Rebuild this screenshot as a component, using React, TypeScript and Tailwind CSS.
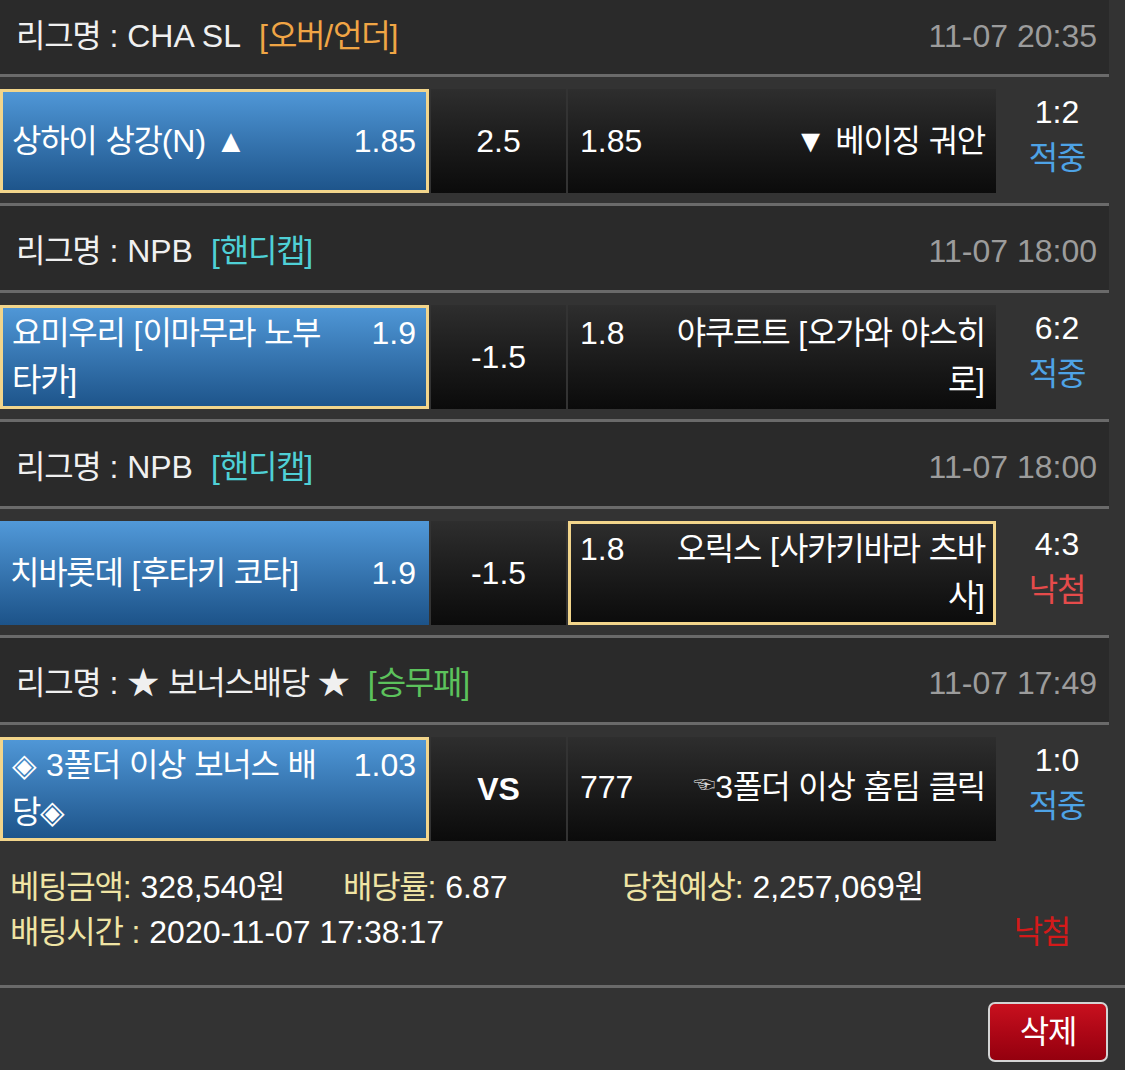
import React from "react";

const HANGUL = /([\uAC00-\uD7A3\u3130-\u318F]+)/;

function T({ s }: { s: string }) {
  const parts = s.split(HANGUL);
  return (
    <>
      {parts.map((p, i) =>
        p && HANGUL.test(p) ? (
          <span key={i} className="tracking-[-0.04em]">
            {p}
          </span>
        ) : (
          <React.Fragment key={i}>{p}</React.Fragment>
        )
      )}
    </>
  );
}

type HeaderProps = {
  first?: boolean;
  league: string;
  tag: string;
  tagClass: string;
  date: string;
};

function Header({ first, league, tag, tagClass, date }: HeaderProps) {
  return (
    <div
      className={`flex w-[1109px] items-center justify-between border-b-[3px] border-[#6a6a6a] bg-[#2a2a2a] pl-4 pr-3 ${
        first ? "h-[77px] pb-[2px]" : "h-[87px] pt-[6px]"
      }`}
    >
      <div className="flex items-center whitespace-nowrap text-[#f0f0f0]">
        <span>
          <T s={league} />
        </span>
        <span className={`ml-[18px] ${tagClass}`}>
          <T s={tag} />
        </span>
      </div>
      <div className="whitespace-nowrap text-[#9c9c9c]">{date}</div>
    </div>
  );
}

type MatchProps = {
  last?: boolean;
  home: React.ReactNode[];
  homeOdds: string;
  homeSel: boolean;
  mid: string;
  midBold?: boolean;
  awayOdds: string;
  away: React.ReactNode[];
  awaySel: boolean;
  score: string;
  result: string;
  win: boolean;
};

function Match(m: MatchProps) {
  return (
    <div
      className={`flex w-[1109px] items-start pt-[12px] ${
        m.last ? "h-[126px]" : "h-[129px] border-b-[3px] border-[#6a6a6a]"
      }`}
    >
      <div
        className={`flex h-[104px] w-[429px] shrink-0 items-center border-[3px] bg-linear-to-b from-[#5199d9] to-[#1c5389] bg-origin-border pr-[10px] text-white ${
          m.homeSel ? "border-[#f2d58b] pl-[9px]" : "border-transparent pl-[7px]"
        }`}
      >
        <div className="flex w-full items-start justify-between leading-[47px]">
          <div className="whitespace-nowrap">
            {m.home.map((l, i) => (
              <div key={i}>{l}</div>
            ))}
          </div>
          <div className="shrink-0">{m.homeOdds}</div>
        </div>
      </div>
      <div
        className={`ml-[2px] flex h-[104px] w-[135px] shrink-0 items-center justify-center bg-linear-to-b from-[#2e2e2e] to-[#0b0b0b] text-white ${
          m.midBold ? "font-bold" : ""
        }`}
      >
        {m.mid}
      </div>
      <div
        className={`ml-[2px] flex h-[104px] w-[428px] shrink-0 items-center border-[3px] bg-linear-to-b from-[#2e2e2e] to-[#0b0b0b] bg-origin-border pl-[9px] pr-[8px] text-white ${
          m.awaySel ? "border-[#f2d58b]" : "border-transparent"
        }`}
      >
        <div className="flex w-full items-start justify-between leading-[47px]">
          <div className="shrink-0">{m.awayOdds}</div>
          <div className="whitespace-nowrap text-right">
            {m.away.map((l, i) => (
              <div key={i}>{l}</div>
            ))}
          </div>
        </div>
      </div>
      <div className="flex h-[104px] w-[113px] shrink-0 flex-col items-center pl-[9px] leading-[46px]">
        <div className="text-white">{m.score}</div>
        <div className={m.win ? "text-[#4ea3e6]" : "text-[#e54b4b]"}>
          <T s={m.result} />
        </div>
      </div>
    </div>
  );
}

export default function App() {
  return (
    <div className="h-[1070px] w-[1125px] overflow-hidden bg-[#333333] font-['Liberation_Sans','Noto_Sans_CJK_KR',sans-serif] text-[32px]">
      <Header
        first
        league="리그명 : CHA SL"
        tag="[오버/언더]"
        tagClass="text-[#f0a545]"
        date="11-07 20:35"
      />
      <Match
        home={[<T key="a" s="상하이 상강(N) ▲" />]}
        homeOdds="1.85"
        homeSel
        mid="2.5"
        awayOdds="1.85"
        away={[<T key="a" s="▼ 베이징 궈안" />]}
        awaySel={false}
        score="1:2"
        result="적중"
        win
      />
      <Header
        league="리그명 : NPB"
        tag="[핸디캡]"
        tagClass="text-[#4fd0d6]"
        date="11-07 18:00"
      />
      <Match
        home={[<T key="a" s="요미우리 [이마무라 노부" />, <T key="b" s="타카]" />]}
        homeOdds="1.9"
        homeSel
        mid="-1.5"
        awayOdds="1.8"
        away={[<T key="a" s="야쿠르트 [오가와 야스히" />, <T key="b" s="로]" />]}
        awaySel={false}
        score="6:2"
        result="적중"
        win
      />
      <Header
        league="리그명 : NPB"
        tag="[핸디캡]"
        tagClass="text-[#4fd0d6]"
        date="11-07 18:00"
      />
      <Match
        home={[<T key="a" s="치바롯데 [후타키 코타]" />]}
        homeOdds="1.9"
        homeSel={false}
        mid="-1.5"
        awayOdds="1.8"
        away={[<T key="a" s="오릭스 [사카키바라 츠바" />, <T key="b" s="사]" />]}
        awaySel
        score="4:3"
        result="낙첨"
        win={false}
      />
      <Header
        league="리그명 : ★ 보너스배당 ★"
        tag="[승무패]"
        tagClass="text-[#5cc25c]"
        date="11-07 17:49"
      />
      <Match
        last
        home={[<T key="a" s="◈ 3폴더 이상 보너스 배" />, <T key="b" s="당◈" />]}
        homeOdds="1.03"
        homeSel
        mid="VS"
        midBold
        awayOdds="777"
        away={[
          <span key="a">
            <span className="relative top-[-6px] text-[22px] text-[#d8d8d8]">☜</span>
            <T s="3폴더 이상 홈팀 클릭" />
          </span>,
        ]}
        awaySel={false}
        score="1:0"
        result="적중"
        win
      />
      <div className="h-[137px] w-[1125px] border-b-[3px] border-[#6a6a6a] px-[10px] pt-[14px] leading-[45px]">
        <div className="flex whitespace-nowrap">
          <div className="w-[333px]">
            <span className="text-[#efe4a4]">
              <T s="베팅금액:" />
            </span>
            <span className="text-white">
              {" "}
              <T s="328,540원" />
            </span>
          </div>
          <div className="w-[279px]">
            <span className="text-[#efe4a4]">
              <T s="배당률:" />
            </span>
            <span className="text-white"> 6.87</span>
          </div>
          <div>
            <span className="text-[#efe4a4]">
              <T s="당첨예상:" />
            </span>
            <span className="text-white">
              {" "}
              <T s="2,257,069원" />
            </span>
          </div>
        </div>
        <div className="flex justify-between whitespace-nowrap">
          <div>
            <span className="text-[#efe4a4]">
              <T s="배팅시간 :" />
            </span>
            <span className="text-white"> 2020-11-07 17:38:17</span>
          </div>
          <div className="mr-[45px] text-[#d41a1a]">
            <T s="낙첨" />
          </div>
        </div>
      </div>
      <div className="flex justify-end pr-[17px] pt-[14px]">
        <button className="flex h-[60px] w-[120px] items-center justify-center rounded-[7px] border-2 border-[#d4d4d4] bg-linear-to-b from-[#c8101e] to-[#94000e] text-white">
          <T s="삭제" />
        </button>
      </div>
    </div>
  );
}
